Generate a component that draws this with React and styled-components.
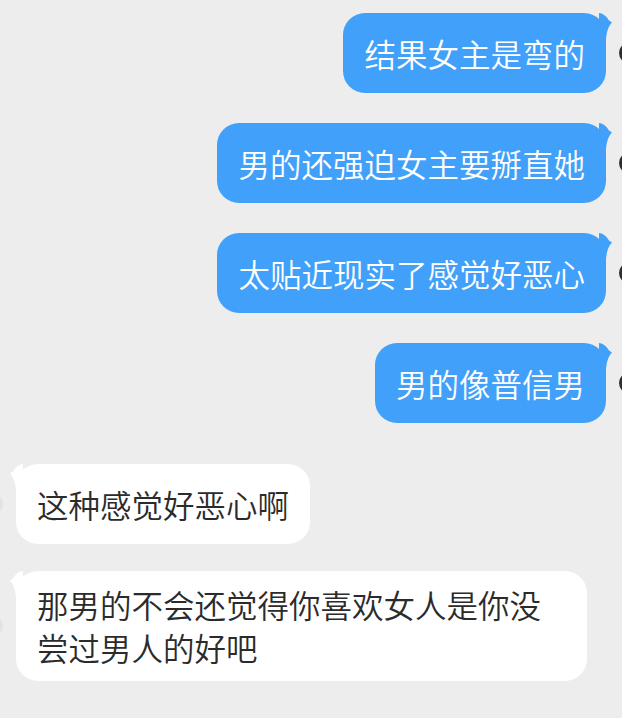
import React from "react";
import styled, { createGlobalStyle } from "styled-components";

const GlobalStyle = createGlobalStyle`
  html, body {
    margin: 0;
    padding: 0;
    overflow: hidden;
    background: #ededed;
  }
  body {
    font-family: "Noto Sans CJK SC", "Noto Sans", sans-serif;
  }
`;

const messages = [
  { from: "me", text: "结果女主是弯的", gap: 13 },
  { from: "me", text: "男的还强迫女主要掰直她", gap: 30 },
  { from: "me", text: "太贴近现实了感觉好恶心", gap: 30 },
  { from: "me", text: "男的像普信男", gap: 30 },
  { from: "them", text: "这种感觉好恶心啊", gap: 41 },
  { from: "them", text: "那男的不会还觉得你喜欢女人是你没尝过男人的好吧", gap: 27 },
];

const Screen = styled.div`
  width: 622px;
  height: 718px;
  overflow: hidden;
  display: flex;
  flex-direction: column;
`;

const Row = styled.div`
  display: flex;
  align-items: center;
  justify-content: flex-end;
  flex-direction: ${(p) => (p.$mine ? "row" : "row-reverse")};
  margin-top: ${(p) => p.$gap}px;
`;

const Avatar = styled.div`
  flex-shrink: 0;
  width: 22px;
  height: 22px;
  border-radius: 50%;
  background: ${(p) => (p.$mine ? "#2e2e2e" : "#e3e3e3")};
  ${(p) =>
    p.$mine
      ? "margin-left: 13px; margin-right: -19px;"
      : "margin-right: 13px; margin-left: -19px;"}
`;

const Bubble = styled.div`
  position: relative;
  box-sizing: border-box;
  max-width: 571px;
  min-height: 80px;
  display: flex;
  align-items: center;
  padding: 12px 21px;
  border-radius: 22px;
  font-size: 31.5px;
  font-weight: 350;
  line-height: 43px;
  background: ${(p) => (p.$mine ? "#41a0fa" : "#ffffff")};
  color: ${(p) => (p.$mine ? "#ffffff" : "#2b2b2b")};
`;

const Tail = styled.svg`
  position: absolute;
  top: 0;
  width: 14px;
  height: 26px;
  ${(p) =>
    p.$mine
      ? "right: -7px;"
      : "left: -7px; transform: scaleX(-1);"}
`;

const BubbleTail = ({ mine }) => (
  <Tail $mine={mine} viewBox="0 0 14 26">
    <path
      d="M0 0 C4 0 8 4 10 7.5 L13 9.5 C10.5 12 8 16 7 26 L0 26 Z"
      fill={mine ? "#41a0fa" : "#ffffff"}
    />
  </Tail>
);

const App = () => (
  <>
    <GlobalStyle />
    <Screen>
      {messages.map((m, i) => {
        const mine = m.from === "me";
        return (
          <Row key={i} $mine={mine} $gap={m.gap}>
            <Bubble $mine={mine}>
              <BubbleTail mine={mine} />
              <span>{m.text}</span>
            </Bubble>
            <Avatar $mine={mine} />
          </Row>
        );
      })}
    </Screen>
  </>
);

export default App;
